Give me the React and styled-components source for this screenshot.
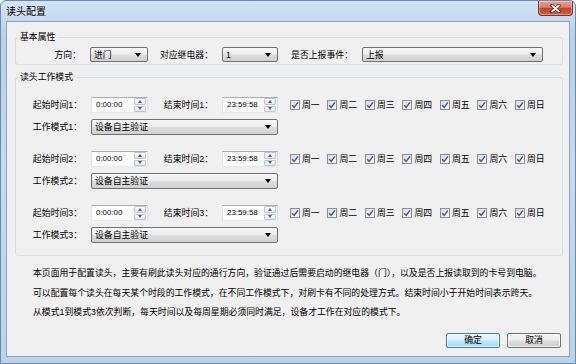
import React from 'react'
import styled, { createGlobalStyle } from 'styled-components'

const GlobalStyle = createGlobalStyle`
  html, body { margin: 0; padding: 0; }
  body {
    width: 576px;
    height: 364px;
    overflow: hidden;
    font-family: "Liberation Sans", "Noto Sans CJK SC", sans-serif;
    font-size: 8.86px;
    color: #000;
    background: #fff;
  }
  * { box-sizing: border-box; }
`

const Window = styled.div`
  width: 576px;
  height: 364px;
  display: flex;
  flex-direction: column;
  padding: 0 5px 6px;
  border: 1px solid #6f8aa8;
  border-radius: 6px 6px 0 0;
  background: linear-gradient(180deg, #d3e3f4 0%, #b9d0ea 10%, #c6daf0 45%, #bcd3ec 100%);
`

const TitleBar = styled.div`
  height: 20px;
  display: flex;
  align-items: flex-start;
`

const Title = styled.span`
  padding-top: 4px;
  font-size: 10px;
  line-height: 13px;
  text-shadow: 0 0 4px rgba(255, 255, 255, 0.9);
`

const CloseButton = styled.div`
  margin-left: auto;
  margin-right: -3px;
  width: 35px;
  height: 15px;
  display: flex;
  align-items: center;
  justify-content: center;
  border: 1px solid #7c3529;
  border-top: none;
  border-radius: 0 0 4px 4px;
  background: linear-gradient(180deg, #e6a596 0%, #d27f6c 45%, #c0432e 52%, #cf5f45 100%);
  box-shadow: inset 0 0 0 1px rgba(255, 255, 255, 0.35);
`

const Client = styled.div`
  flex: 1;
  display: flex;
  flex-direction: column;
  border: 1px solid #8fa5bf;
  background: #f0f0f0;
`

const Group = styled.fieldset`
  margin: ${p => p.$mt}px 6px 0 8px;
  padding: ${p => p.$pt}px 0 ${p => p.$pb}px 0;
  min-width: 0;
  border: 1px solid #d5dfe5;
  border-radius: 3px;
`

const Legend = styled.legend`
  margin-left: 2px;
  padding: 0 2px;
  line-height: 12px;
`

const Row = styled.div`
  display: flex;
  align-items: center;
  margin-top: ${p => p.$mt || 0}px;
`

const Label = styled.span`
  width: ${p => p.$w}px;
  margin-right: 9px;
  text-align: right;
  white-space: nowrap;
  line-height: 12px;
`

const Combo = styled.div`
  width: ${p => p.$w}px;
  height: ${p => p.$h || 16}px;
  display: flex;
  align-items: center;
  justify-content: space-between;
  padding: 0 6px 0 3px;
  border: 1px solid #707070;
  border-radius: 2px;
  background: linear-gradient(180deg, #f7f7f7 0%, #ececec 48%, #dedede 52%, #d0d0d0 100%);
  line-height: 12px;
`

const Arrow = styled.span`
  width: 0;
  height: 0;
  border-left: 3.5px solid transparent;
  border-right: 3.5px solid transparent;
  border-top: 4px solid #000;
`

const Spin = styled.div`
  width: ${p => p.$w}px;
  height: 16px;
  display: flex;
  border: 1px solid;
  border-color: #abadb3 #dbdfe6 #e3e9ef #e2e3ea;
  background: #fff;
`

const SpinText = styled.span`
  flex: 1;
  padding-left: 4px;
  font-size: 7.9px;
  line-height: 14px;
`

const SpinCol = styled.div`
  width: 13px;
  display: flex;
  flex-direction: column;
  gap: 1px;
  padding: 0 1px 0 0;
`

const SpinBtn = styled.div`
  flex: 1;
  display: flex;
  align-items: center;
  justify-content: center;
  border: 1px solid #c0c4cc;
  border-radius: 1px;
  background: linear-gradient(180deg, #fdfdfd, #e4e7eb);
  &::after {
    content: '';
    border-left: 2.5px solid transparent;
    border-right: 2.5px solid transparent;
    ${p => (p.$down ? 'border-top: 3px solid #4b5f80;' : 'border-bottom: 3px solid #4b5f80;')}
  }
`

const Days = styled.div`
  display: flex;
  gap: 7.8px;
  margin-left: 12px;
`

const Day = styled.label`
  display: flex;
  align-items: center;
  gap: 2px;
  line-height: 12px;
`

const Box = styled.span`
  width: 10px;
  height: 10px;
  display: flex;
  align-items: center;
  justify-content: center;
  border: 1px solid #8e8f8f;
  background: linear-gradient(135deg, #d8d8d8, #fbfbfb);
`

const Desc = styled.div`
  margin-top: 8px;
  padding-left: 26px;
  line-height: 19.5px;
  white-space: nowrap;
`

const Footer = styled.div`
  margin-top: auto;
  display: flex;
  justify-content: flex-end;
  gap: 7px;
  padding: 0 8px 8px 0;
`

const Button = styled.button`
  width: 54px;
  height: 15px;
  padding: 0;
  font: inherit;
  line-height: 13px;
  color: #000;
  border: 1px solid ${p => (p.$default ? '#3c7fb1' : '#707070')};
  border-radius: 2px;
  background: ${p =>
    p.$default
      ? 'linear-gradient(180deg, #eaf6fd 0%, #d9f0fc 48%, #bee6fd 52%, #a7d9f5 100%)'
      : 'linear-gradient(180deg, #f4f4f4 0%, #ebebeb 48%, #dddddd 52%, #cfcfcf 100%)'};
  box-shadow: inset 0 0 0 1px rgba(255, 255, 255, 0.7);
`

const CheckMark = () => (
  <svg width="8" height="8" viewBox="0 0 8 8">
    <path d="M1.2 4.2 L3.2 6.3 L6.9 1.4" fill="none" stroke="#3b55a3" strokeWidth="1.4" />
  </svg>
)

const CloseX = () => (
  <svg width="11" height="9" viewBox="0 0 11 9">
    <path d="M2 1.5 L9 7.5 M9 1.5 L2 7.5" stroke="#5a2018" strokeWidth="3.2" strokeLinecap="round" />
    <path d="M2 1.5 L9 7.5 M9 1.5 L2 7.5" stroke="#fff" strokeWidth="1.8" strokeLinecap="round" />
  </svg>
)

const days = ['周一', '周二', '周三', '周四', '周五', '周六', '周日']

const lines = [
  '本页面用于配置读头，主要有刷此读头对应的通行方向，验证通过后需要启动的继电器（门），以及是否上报读取到的卡号到电脑。',
  '可以配置每个读头在每天某个时段的工作模式，在不同工作模式下，对刷卡有不同的处理方式。结束时间小于开始时间表示跨天。',
  '从模式1到模式3依次判断，每天时间以及每周星期必须同时满足，设备才工作在对应的模式下。',
]

const SpinBox = ({ w, value }) => (
  <Spin $w={w}>
    <SpinText>{value}</SpinText>
    <SpinCol>
      <SpinBtn />
      <SpinBtn $down />
    </SpinCol>
  </Spin>
)

const Mode = ({ n, first }) => (
  <>
    <Row $mt={first ? 0 : 16}>
      <Label $w={66}>起始时间{n}：</Label>
      <SpinBox w={57} value="0:00:00" />
      <Label $w={65}>结束时间{n}：</Label>
      <SpinBox w={56} value="23:59:58" />
      <Days>
        {days.map(d => (
          <Day key={d}>
            <Box><CheckMark /></Box>
            {d}
          </Day>
        ))}
      </Days>
    </Row>
    <Row $mt={6}>
      <Label $w={66}>工作模式{n}：</Label>
      <Combo $w={187}>
        设备自主验证
        <Arrow />
      </Combo>
    </Row>
  </>
)

export default function App() {
  return (
    <>
      <GlobalStyle />
      <Window>
        <TitleBar>
          <Title>读头配置</Title>
          <CloseButton><CloseX /></CloseButton>
        </TitleBar>
        <Client>
          <Group $mt={9} $pt={4} $pb={2}>
            <Legend>基本属性</Legend>
            <Row>
              <Label $w={65}>方向：</Label>
              <Combo $w={58} $h={15}>进门<Arrow /></Combo>
              <Label $w={65}>对应继电器：</Label>
              <Combo $w={56} $h={15}>1<Arrow /></Combo>
              <Label $w={75}>是否上报事件：</Label>
              <Combo $w={181} $h={15}>上报<Arrow /></Combo>
            </Row>
          </Group>
          <Group $mt={6} $pt={14} $pb={12}>
            <Legend>读头工作模式</Legend>
            {[1, 2, 3].map(n => (
              <Mode key={n} n={n} first={n === 1} />
            ))}
          </Group>
          <Desc>
            {lines.map(l => (
              <div key={l}>{l}</div>
            ))}
          </Desc>
          <Footer>
            <Button $default>确定</Button>
            <Button>取消</Button>
          </Footer>
        </Client>
      </Window>
    </>
  )
}
